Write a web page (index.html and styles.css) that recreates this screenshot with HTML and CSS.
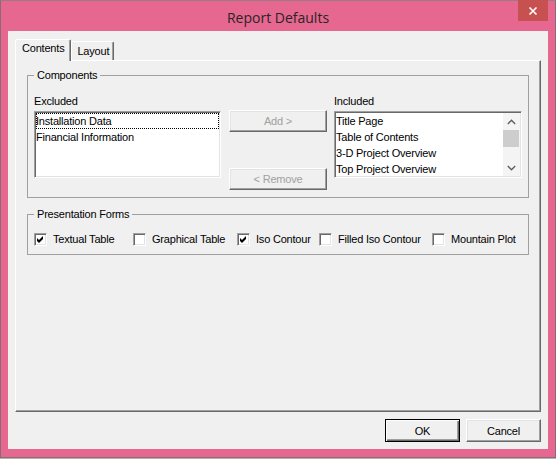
FILE: index.html
```html
<!DOCTYPE html>
<html>
<head>
<meta charset="utf-8">
<title>Report Defaults</title>
<link rel="stylesheet" href="styles.css">
</head>
<body>
<div class="window">
  <div class="titlebar">
    <span class="title">Report Defaults</span>
    <div class="close">
      <svg width="10" height="10" viewBox="0 0 10 10"><path d="M1.5 1.5 L8.5 8.5 M8.5 1.5 L1.5 8.5" stroke="#fff" stroke-width="1.6" fill="none"/></svg>
    </div>
  </div>
  <div class="client">
    <div class="tabs">
      <div class="tab active">Contents</div>
      <div class="tab">Layout</div>
    </div>
    <div class="panel">
      <fieldset class="group comp">
        <legend>Components</legend>
        <div class="comp-body">
          <div class="col">
            <div class="lbl">Excluded</div>
            <div class="listbox">
              <div class="items">
                <div class="item focus">Installation Data</div>
                <div class="item">Financial Information</div>
              </div>
            </div>
          </div>
          <div class="mid">
            <div class="btn disabled">Add &gt;</div>
            <div class="btn disabled">&lt; Remove</div>
          </div>
          <div class="col right">
            <div class="lbl">Included</div>
            <div class="listbox">
              <div class="items">
                <div class="item">Title Page</div>
                <div class="item">Table of Contents</div>
                <div class="item">3-D Project Overview</div>
                <div class="item">Top Project Overview</div>
              </div>
              <div class="vscroll">
                <div class="arrow"><svg width="9" height="6" viewBox="0 0 9 6"><path d="M0.8 5 L4.5 1.3 L8.2 5" stroke="#606060" stroke-width="1.4" fill="none"/></svg></div>
                <div class="thumb"></div>
                <div class="track"></div>
                <div class="arrow"><svg width="9" height="6" viewBox="0 0 9 6"><path d="M0.8 1 L4.5 4.7 L8.2 1" stroke="#606060" stroke-width="1.4" fill="none"/></svg></div>
              </div>
            </div>
          </div>
        </div>
      </fieldset>
      <fieldset class="group forms">
        <legend>Presentation Forms</legend>
        <div class="checks">
          <div class="check"><span class="box"><svg width="11" height="11" viewBox="0 0 11 11"><polygon points="2,4 4,6 8,2 8,5 4,9 2,7" fill="#000"/></svg></span>Textual Table</div>
          <div class="check"><span class="box"></span>Graphical Table</div>
          <div class="check"><span class="box"><svg width="11" height="11" viewBox="0 0 11 11"><polygon points="2,4 4,6 8,2 8,5 4,9 2,7" fill="#000"/></svg></span>Iso Contour</div>
          <div class="check"><span class="box"></span>Filled Iso Contour</div>
          <div class="check"><span class="box"></span>Mountain Plot</div>
        </div>
      </fieldset>
    </div>
    <div class="buttons">
      <div class="btn default">OK</div>
      <div class="btn">Cancel</div>
    </div>
  </div>
</div>
</body>
</html>
```
FILE: styles.css
```css
html, body {
  margin: 0;
  padding: 0;
  background: #b3b3b3;
}
body {
  font-family: "Liberation Sans", Arial, sans-serif;
  font-size: 11px;
  letter-spacing: -0.2px;
  color: #000;
}
.window {
  width: 556px;
  height: 458px;
  box-sizing: border-box;
  background: #e6678f;
  border: 1px solid #8d6a78;
  border-top-color: #9a7a86;
  padding: 0 7px 8px 7px;
  display: flex;
  flex-direction: column;
}
.titlebar {
  height: 30px;
  position: relative;
  display: flex;
  align-items: center;
  justify-content: center;
}
.title {
  font-family: "Open Sans", "Noto Sans", sans-serif;
  font-size: 14px;
  letter-spacing: 0;
  color: #262626;
  padding-top: 2px;
}
.close {
  position: absolute;
  right: 0;
  top: -1px;
  width: 30px;
  height: 21px;
  background: #c75050;
  display: flex;
  align-items: center;
  justify-content: center;
}
.client {
  height: 418px;
  box-sizing: border-box;
  background: #f0f0f0;
  padding: 8px 7px 7px 7px;
  display: flex;
  flex-direction: column;
}
.tabs {
  height: 21px;
  display: flex;
  align-items: flex-end;
  position: relative;
  z-index: 1;
}
.tab {
  box-sizing: border-box;
  height: 19px;
  padding: 3px 4px 0 5px;
  line-height: 13px;
  background: #f0f0f0;
  border-top: 1px solid #fff;
  border-left: 1px solid #fff;
  border-right: 1px solid #696969;
  box-shadow: inset -1px 0 #a0a0a0;
  border-radius: 2px 2px 0 0;
}
.tab.active {
  height: 22px;
  margin-bottom: -1px;
  padding: 2px 6px 0 6px;
}
.panel {
  flex: 1;
  box-sizing: border-box;
  border: 1px solid;
  border-color: #fff #696969 #696969 #fff;
  box-shadow: inset -1px -1px #a0a0a0;
  padding: 8px 11px 0 11px;
  display: flex;
  flex-direction: column;
}
.group {
  margin: 0;
  min-inline-size: 0;
  border: 1px solid #a0a0a0;
  padding: 13px 6px 7px 6px;
}
.group legend {
  padding: 0 3px;
  line-height: 13px;
}
.comp-body {
  display: flex;
}
.col {
  width: 187px;
  display: flex;
  flex-direction: column;
}
.col.right {
  width: 188px;
  margin-left: 7px;
}
.lbl {
  line-height: 13px;
  margin-bottom: 3px;
}
.listbox {
  height: 67px;
  box-sizing: border-box;
  background: #fff;
  border: 1px solid;
  border-color: #a0a0a0 #fff #fff #a0a0a0;
  box-shadow: inset 1px 1px #696969, inset -1px -1px #e3e3e3;
  padding: 1px;
  display: flex;
  overflow: hidden;
}
.items {
  flex: 1;
  overflow: hidden;
}
.item {
  height: 16px;
  line-height: 16px;
  padding-left: 0;
  white-space: nowrap;
}
.item.focus {
  outline: 1px dotted #000;
  outline-offset: -1px;
}
.vscroll {
  width: 17px;
  background: #f4f4f4;
  display: flex;
  flex-direction: column;
}
.arrow {
  height: 17px;
  display: flex;
  align-items: center;
  justify-content: center;
}
.thumb {
  height: 17px;
  margin: 0 1px 0 0;
  background: #cdcdcd;
}
.track {
  flex: 1;
}
.mid {
  width: 98px;
  margin-left: 8px;
  padding-top: 15px;
  display: flex;
  flex-direction: column;
  gap: 36px;
}
.btn {
  box-sizing: border-box;
  height: 22px;
  display: flex;
  align-items: center;
  justify-content: center;
  background: #f0f0f0;
  border: 1px solid;
  border-color: #fff #696969 #696969 #fff;
  box-shadow: inset -1px -1px #a0a0a0, inset 1px 1px #e3e3e3;
}
.btn.disabled {
  color: #a0a0a0;
}
.forms {
  margin-top: 10px;
  padding: 12px 6px 8px 6px;
}
.checks {
  display: grid;
  grid-template-columns: 99px 104px 82px 113px auto;
  height: 13px;
}
.check {
  display: flex;
  align-items: center;
  gap: 6px;
  line-height: 13px;
  white-space: nowrap;
}
.box {
  width: 13px;
  height: 13px;
  box-sizing: border-box;
  background: #fff;
  border: 1px solid;
  border-color: #a0a0a0 #fff #fff #a0a0a0;
  box-shadow: inset 1px 1px #696969, inset -1px -1px #e3e3e3;
  display: flex;
  align-items: center;
  justify-content: center;
}
.buttons {
  margin-top: 7px;
  display: flex;
  justify-content: flex-end;
  gap: 6px;
}
.buttons .btn {
  width: 75px;
  height: 23px;
}
.btn.default {
  border-color: #000;
  box-shadow: inset 1px 1px #fff, inset -1px -1px #696969, inset -2px -2px #a0a0a0;
}
```
